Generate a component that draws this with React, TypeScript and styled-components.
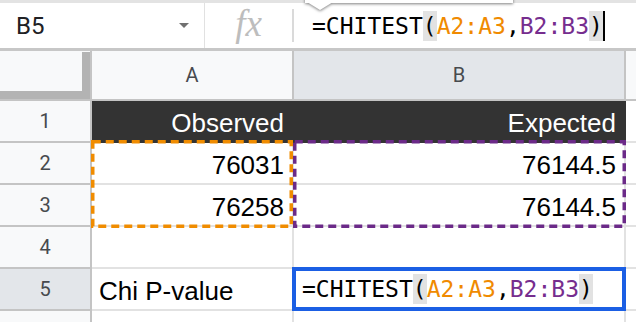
import React from 'react';
import styled, { createGlobalStyle } from 'styled-components';

const Global = createGlobalStyle`
  html, body { margin: 0; padding: 0; background: #fff; }
  body { width: 636px; height: 322px; overflow: hidden; font-family: "Liberation Sans", Arial, sans-serif; }
`;

const Screen = styled.div`
  position: relative;
  width: 636px;
  height: 322px;
  overflow: hidden;
  background: #fff;
`;

const TopStrip = styled.div`
  position: relative;
  z-index: 5;
  height: 3px;
  background: #e3e3e3;
`;

const Tooltip = styled.div`
  position: absolute;
  left: 305px;
  top: -14px;
  width: 208px;
  height: 17px;
  filter: drop-shadow(0 1px 1.5px rgba(0, 0, 0, 0.5));
`;

const TooltipBody = styled.div`
  height: 17px;
  background: #fff;
`;

const TooltipTip = styled.div`
  position: absolute;
  left: 2px;
  top: 16px;
  width: 0;
  height: 0;
  border-left: 13px solid transparent;
  border-right: 13px solid transparent;
  border-top: 8px solid #fff;
`;

const FormulaBar = styled.div`
  display: flex;
  align-items: stretch;
  height: 45px;
  border-bottom: 3px solid #c7c7c7;
  background: #fff;
`;

const NameBox = styled.div`
  width: 205px;
  box-sizing: border-box;
  display: flex;
  align-items: center;
  justify-content: space-between;
  padding: 0 15px 0 16px;
  border-right: 1px solid #e1e1e1;
  font-family: Roboto, "Liberation Sans", sans-serif;
  font-size: 24px;
  color: #202124;
`;

const Caret = styled.span`
  width: 0;
  height: 0;
  border-left: 5px solid transparent;
  border-right: 5px solid transparent;
  border-top: 5px solid #707070;
`;

const FxBox = styled.div`
  width: 87px;
  display: flex;
  align-items: center;
  justify-content: center;
  font-family: "Liberation Serif", "DejaVu Serif", serif;
  font-style: italic;
  font-size: 37px;
  color: #bdbdbd;
  padding-bottom: 4px;
  box-sizing: border-box;
`;

const Divider = styled.div`
  width: 2px;
  height: 33px;
  align-self: center;
  background: #dadada;
`;

const FormulaInput = styled.div`
  flex: 1;
  display: flex;
  align-items: center;
  padding-left: 18px;
`;

const Code = styled.div`
  display: flex;
  align-items: center;
  font-family: "DejaVu Sans Mono", "Liberation Mono", monospace;
  font-size: 23px;
  line-height: 30px;
  color: #000;
  white-space: pre;
`;

const Tok = styled.span<{ $kind?: 'a' | 'b' | 'paren' }>`
  color: ${(p) => (p.$kind === 'a' ? '#f08a00' : p.$kind === 'b' ? '#762d8e' : '#000')};
  background: ${(p) => (p.$kind === 'paren' ? '#e2e2e2' : 'transparent')};
`;

const Cursor = styled.span`
  display: inline-block;
  width: 2px;
  height: 30px;
  background: #000;
`;

const Sheet = styled.div`
  position: relative;
  display: grid;
  grid-template-columns: 92px 202px 332px 1fr;
  grid-template-rows: 50px repeat(6, 42px);
`;

const Corner = styled.div`
  box-sizing: border-box;
  background: #f8f9fa;
  border-right: 2px solid #c4c4c4;
  border-bottom: 2px solid #c4c4c4;
`;

const FreezeHandle = styled.div`
  box-sizing: border-box;
  width: 90px;
  height: 47px;
  margin-top: 1px;
  border-right: 8px solid #b3b3b3;
  border-bottom: 8px solid #b3b3b3;
`;

const Header = styled.div<{ $selected?: boolean }>`
  box-sizing: border-box;
  display: flex;
  align-items: center;
  justify-content: center;
  background: ${(p) => (p.$selected ? '#e3e6ea' : '#f8f9fa')};
  border-right: 2px solid #c4c4c4;
  border-bottom: 2px solid #c4c4c4;
  font-family: Roboto, "Liberation Sans", sans-serif;
  font-size: 20px;
  color: #474a4e;
  overflow: hidden;
`;

const Cell = styled.div<{ $dark?: boolean; $align?: 'left' | 'right' }>`
  box-sizing: border-box;
  display: flex;
  align-items: flex-end;
  justify-content: ${(p) => (p.$align === 'left' ? 'flex-start' : 'flex-end')};
  padding: 0 8px 3px 7px;
  background: ${(p) => (p.$dark ? '#333333' : '#fff')};
  color: ${(p) => (p.$dark ? '#fff' : '#000')};
  border-right: 2px solid ${(p) => (p.$dark ? '#333333' : '#e2e2e2')};
  border-bottom: 2px solid ${(p) => (p.$dark ? '#333333' : '#e2e2e2')};
  font-size: 26px;
  line-height: 30px;
  white-space: nowrap;
`;

const Range = styled.svg<{ $left: number; $top: number }>`
  position: absolute;
  left: ${(p) => p.$left}px;
  top: ${(p) => p.$top}px;
  overflow: visible;
  pointer-events: none;
`;

const ActiveCell = styled.div`
  position: absolute;
  left: 292px;
  top: 216px;
  width: 334px;
  height: 44px;
  box-sizing: border-box;
  border: 4px solid #1b5fe4;
  background: #fff;
  display: flex;
  align-items: center;
  padding-left: 6px;
`;

type RangeBoxProps = { left: number; top: number; width: number; height: number; color: string };

const RangeBox = ({ left, top, width, height, color }: RangeBoxProps) => (
  <Range $left={left} $top={top} width={width} height={height}>
    <rect
      x={1.75}
      y={1.75}
      width={width - 3.5}
      height={height - 3.5}
      fill="none"
      stroke={color}
      strokeWidth={3.5}
      strokeDasharray="8 5"
    />
  </Range>
);

const FormulaText = () => (
  <>
    <Tok>=CHITEST</Tok>
    <Tok $kind="paren">(</Tok>
    <Tok $kind="a">A2:A3</Tok>
    <Tok>,</Tok>
    <Tok $kind="b">B2:B3</Tok>
    <Tok $kind="paren">)</Tok>
  </>
);

const rows: { n: number; label: string; a: string; b: string; dark?: boolean; aAlign?: 'left' | 'right'; selected?: boolean }[] = [
  { n: 1, label: '1', a: 'Observed', b: 'Expected', dark: true },
  { n: 2, label: '2', a: '76031', b: '76144.5' },
  { n: 3, label: '3', a: '76258', b: '76144.5' },
  { n: 4, label: '4', a: '', b: '' },
  { n: 5, label: '5', a: 'Chi P-value', b: '', aAlign: 'left', selected: true },
  { n: 6, label: '', a: '', b: '' },
];

export default function App() {
  return (
    <Screen>
      <Global />
      <TopStrip>
        <Tooltip>
          <TooltipBody />
          <TooltipTip />
        </Tooltip>
      </TopStrip>
      <FormulaBar>
        <NameBox>
          <span>B5</span>
          <Caret />
        </NameBox>
        <FxBox>fx</FxBox>
        <Divider />
        <FormulaInput>
          <Code>
            <FormulaText />
            <Cursor />
          </Code>
        </FormulaInput>
      </FormulaBar>
      <Sheet>
        <Corner>
          <FreezeHandle />
        </Corner>
        <Header>A</Header>
        <Header $selected>B</Header>
        <Header />
        {rows.map((r) => (
          <React.Fragment key={r.n}>
            <Header $selected={r.selected}>{r.label}</Header>
            <Cell $dark={r.dark} $align={r.aAlign}>{r.a}</Cell>
            <Cell $dark={r.dark}>{r.b}</Cell>
            <Cell />
          </React.Fragment>
        ))}
        <RangeBox left={91} top={89} width={202} height={88} color="#f08c00" />
        <RangeBox left={293} top={89} width={333} height={88} color="#6b2a88" />
        <ActiveCell>
          <Code>
            <FormulaText />
          </Code>
        </ActiveCell>
      </Sheet>
    </Screen>
  );
}
